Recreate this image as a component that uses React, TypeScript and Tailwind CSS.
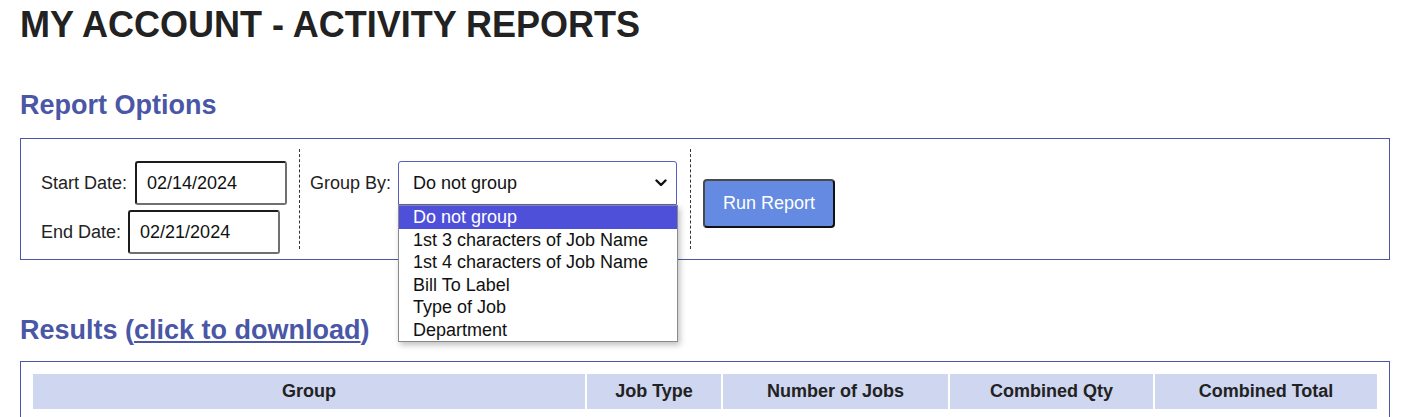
import React from 'react';

const groupOptions = [
  'Do not group',
  '1st 3 characters of Job Name',
  '1st 4 characters of Job Name',
  'Bill To Label',
  'Type of Job',
  'Department',
];

const columns = [
  { label: 'Group', w: 'w-[552px]' },
  { label: 'Job Type', w: 'w-[134px]' },
  { label: 'Number of Jobs', w: 'w-[225px]' },
  { label: 'Combined Qty', w: 'w-[203px]' },
  { label: 'Combined Total', w: 'w-[222px]' },
];

const DateInput: React.FC<{ value: string }> = ({ value }) => (
  <div className="w-[152px] h-[44px] flex items-center pl-[10px] rounded-[3px] border-2 border-t-[#1c1c1c] border-l-[#1c1c1c] border-r-[#707070] border-b-[#707070] bg-white text-[#111]">
    {value}
  </div>
);

export default function App() {
  return (
    <div className="min-h-screen bg-white pl-[20px] pr-[24px] font-['Liberation_Sans',Arial,sans-serif] text-[18px] text-[#222]">
      <h1 className="pt-[4px] text-[36px] leading-[41px] font-bold text-[#222]">MY ACCOUNT - ACTIVITY REPORTS</h1>

      <h2 className="mt-[45px] text-[27px] leading-[31px] font-bold text-[#4a56a6]">Report Options</h2>

      <div className="mt-[17px] border border-[#4a56a6] p-[10px] flex items-start">
        {/* dates */}
        <div className="w-[269px] h-[100px] border-r border-dashed border-[#333] pl-[10px] pt-[12px]">
          <div className="flex items-center">
            <span>Start Date:</span>
            <div className="ml-[8px]">
              <DateInput value="02/14/2024" />
            </div>
          </div>
          <div className="flex items-center mt-[5px]">
            <span>End Date:</span>
            <div className="ml-[7px]">
              <DateInput value="02/21/2024" />
            </div>
          </div>
        </div>

        {/* group by */}
        <div className="relative w-[391px] h-[100px] border-r border-dashed border-[#333] pl-[10px] pt-[12px]">
          <div className="flex items-center">
            <span>Group By:</span>
            <div className="ml-[7px] w-[279px] h-[44px] flex items-center justify-between pl-[14px] pr-[9px] rounded-t-[3px] border border-[#5560bd] bg-white text-[#111]">
              <span>Do not group</span>
              <svg width="12" height="8" viewBox="0 0 12 8" fill="none" stroke="#111" strokeWidth="2.4" strokeLinecap="round" strokeLinejoin="round">
                <path d="M1.5 1.5 6 6l4.5-4.5" />
              </svg>
            </div>
          </div>
          <ul className="absolute z-10 left-[98px] top-[56px] w-[280px] border border-[#8a8a8a] bg-white shadow-[2px_3px_6px_rgba(0,0,0,0.25)] text-[#111]">
            {groupOptions.map((opt, i) => (
              <li
                key={opt}
                className={`h-[22.5px] leading-[22.5px] pl-[14px] ${i === 0 ? 'bg-[#4f50d9] text-white' : ''}`}
              >
                {opt}
              </li>
            ))}
          </ul>
        </div>

        {/* run */}
        <div className="pl-[12px] pt-[30px]">
          <button className="w-[132px] h-[49px] rounded-[4px] border-2 border-t-[#4a4a4a] border-l-[#4a4a4a] border-r-[#111] border-b-[#111] bg-[#648ae1] text-white text-[18px]">
            Run Report
          </button>
        </div>
      </div>

      <h2 className="mt-[55px] text-[27px] leading-[31px] font-bold text-[#4a56a6]">
        Results (<a href="#" className="underline">click to download</a>)
      </h2>

      <div className="mt-[15px] border border-[#4a56a6] p-[10px] pb-[40px]">
        <table className="border-separate border-spacing-[2px]">
          <thead>
            <tr>
              {columns.map((c) => (
                <th key={c.label} className={`${c.w} h-[35px] bg-[#cfd6f0] font-bold text-[#222] text-center`}>
                  {c.label}
                </th>
              ))}
            </tr>
          </thead>
        </table>
      </div>
    </div>
  );
}
